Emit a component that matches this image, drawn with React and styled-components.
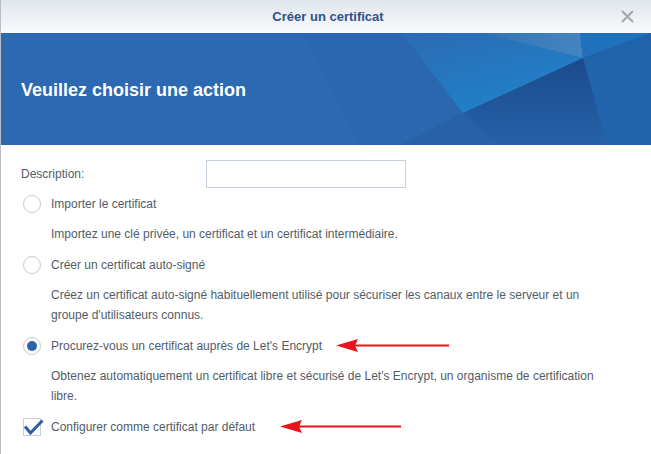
import React from "react";
import styled, { createGlobalStyle } from "styled-components";

const Global = createGlobalStyle`
  html, body { margin: 0; padding: 0; background: #fff; }
  body { font-family: "Liberation Sans", Arial, sans-serif; }
  * { box-sizing: border-box; }
`;

const Dialog = styled.div`
  width: 651px;
  height: 454px;
  border-left: 1px solid #b9bec5;
  background: #fff;
  display: flex;
  flex-direction: column;
  overflow: hidden;
`;

const TitleBar = styled.div`
  height: 33px;
  flex: none;
  display: grid;
  grid-template-columns: 1fr auto 1fr;
  align-items: center;
  background: linear-gradient(to bottom, #e0e6ee 0%, #f9fafc 100%);
`;

const Title = styled.div`
  grid-column: 2;
  font-size: 13px;
  font-weight: bold;
  color: #2e5386;
  transform: translateX(2px);
`;

const Close = styled.button`
  grid-column: 3;
  justify-self: end;
  margin-right: 17px;
  width: 14px;
  height: 14px;
  padding: 0;
  border: 0;
  background: none;
  display: flex;
  align-items: center;
  justify-content: center;
`;

const Banner = styled.div`
  height: 112px;
  flex: none;
  position: relative;
  background: #2d69b0;
  display: flex;
  align-items: center;
  padding-left: 20px;
  overflow: hidden;
`;

const BannerArt = styled.svg`
  position: absolute;
  inset: 0;
  width: 100%;
  height: 100%;
`;

const BannerTitle = styled.h1`
  position: relative;
  margin: 0;
  font-size: 18px;
  font-weight: bold;
  color: #fff;
  transform: translateY(1px);
`;

const Body = styled.div`
  padding: 15px 20px 0 20px;
  display: flex;
  flex-direction: column;
  color: #525c67;
  font-size: 12px;
`;

const FieldRow = styled.div`
  display: flex;
  align-items: center;
  height: 28px;
`;

const Label = styled.label`
  width: 185px;
  flex: none;
`;

const TextInput = styled.input`
  width: 200px;
  height: 28px;
  border: 1px solid #c7d2de;
  border-radius: 0;
  outline: none;
  padding: 0 6px;
  font: inherit;
`;

const OptionRow = styled.div`
  display: flex;
  align-items: center;
  height: 31px;
  padding-left: 2px;
`;

const Radio = styled.span`
  width: 18px;
  height: 18px;
  flex: none;
  border-radius: 50%;
  border: 1px solid #c3ccd7;
  background: #fff;
  display: flex;
  align-items: center;
  justify-content: center;
  &::after {
    content: "";
    width: 10px;
    height: 10px;
    border-radius: 50%;
    background: ${(p) => (p.$checked ? "#2c62a8" : "transparent")};
  }
`;

const CheckBox = styled.span`
  position: relative;
  width: 18px;
  height: 18px;
  flex: none;
  border: 1px solid #c6cfd9;
  background: #fff;
`;

const CheckMark = styled.svg`
  position: absolute;
  left: -1px;
  top: -1px;
  overflow: visible;
`;

const OptionText = styled.span`
  margin-left: 10px;
`;

const SubText = styled.p`
  margin: 0;
  padding: 5px 0 5px 30px;
  line-height: 20px;
  max-width: 580px;
`;

const Arrow = styled.svg`
  flex: none;
  margin-left: ${(p) => p.$gap}px;
`;

function RedArrow({ length, gap }) {
  return (
    <Arrow $gap={gap} width={length} height="15" viewBox={`0 0 ${length} 15`}>
      <line x1="18" y1="7.5" x2={length} y2="7.5" stroke="#e8131b" strokeWidth="2" />
      <polygon points="0,7.5 22,1 19,7.5 22,14" fill="#e8131b" />
    </Arrow>
  );
}

export default function App() {
  return (
    <>
      <Global />
      <Dialog>
        <TitleBar>
          <Title>Créer un certificat</Title>
          <Close aria-label="Fermer">
            <svg width="13" height="13" viewBox="0 0 13 13">
              <path d="M1 1 L12 12 M12 1 L1 12" stroke="#a3a6aa" strokeWidth="2" />
            </svg>
          </Close>
        </TitleBar>
        <Banner>
          <BannerArt viewBox="0 0 650 112" preserveAspectRatio="none">
            <defs>
              <linearGradient id="bright" x1="0" y1="0" x2="0.6" y2="1">
                <stop offset="0" stopColor="#2c6bb2" />
                <stop offset="1" stopColor="#1f82ca" />
              </linearGradient>
              <linearGradient id="dark" x1="0" y1="0" x2="0" y2="1">
                <stop offset="0" stopColor="#1a4a8e" />
                <stop offset="1" stopColor="#2761a8" />
              </linearGradient>
              <linearGradient id="light" x1="0" y1="0" x2="1" y2="0">
                <stop offset="0" stopColor="#3274b6" />
                <stop offset="1" stopColor="#4584c0" />
              </linearGradient>
            </defs>
            <polygon points="302,0 650,0 650,112 359,112" fill="#2b67ae" />
            <polygon points="401,0 482,0 582,25 462,80" fill="url(#bright)" />
            <polygon points="482,0 579,0 582,25" fill="url(#light)" />
            <polygon points="579,0 650,0 582,25" fill="#2170ba" />
            <polygon points="650,0 650,87 582,25" fill="#1f63aa" />
            <polygon points="582,25 650,87 650,112 606,112" fill="#2264ab" />
            <polygon points="582,25 606,112 496,112 462,80" fill="url(#dark)" />
            <polygon points="462,80 496,112 400,112" fill="#2961a8" />
          </BannerArt>
          <BannerTitle>Veuillez choisir une action</BannerTitle>
        </Banner>
        <Body>
          <FieldRow>
            <Label>Description:</Label>
            <TextInput type="text" />
          </FieldRow>
          <OptionRow>
            <Radio />
            <OptionText>Importer le certificat</OptionText>
          </OptionRow>
          <SubText>Importez une clé privée, un certificat et un certificat intermédiaire.</SubText>
          <OptionRow>
            <Radio />
            <OptionText>Créer un certificat auto-signé</OptionText>
          </OptionRow>
          <SubText>
            Créez un certificat auto-signé habituellement utilisé pour sécuriser les canaux entre le serveur et un
            groupe d'utilisateurs connus.
          </SubText>
          <OptionRow>
            <Radio $checked />
            <OptionText>Procurez-vous un certificat auprès de Let's Encrypt</OptionText>
            <RedArrow length={113} gap={14} />
          </OptionRow>
          <SubText>
            Obtenez automatiquement un certificat libre et sécurisé de Let's Encrypt, un organisme de certification
            libre.
          </SubText>
          <OptionRow>
            <CheckBox>
              <CheckMark width="20" height="18" viewBox="0 0 20 18">
                <path d="M2 8.5 L7.5 15 L19.5 2.5" fill="none" stroke="#2a5fa4" strokeWidth="3" strokeLinejoin="miter" />
              </CheckMark>
            </CheckBox>
            <OptionText>Configurer comme certificat par défaut</OptionText>
            <RedArrow length={121} gap={25} />
          </OptionRow>
        </Body>
      </Dialog>
    </>
  );
}
